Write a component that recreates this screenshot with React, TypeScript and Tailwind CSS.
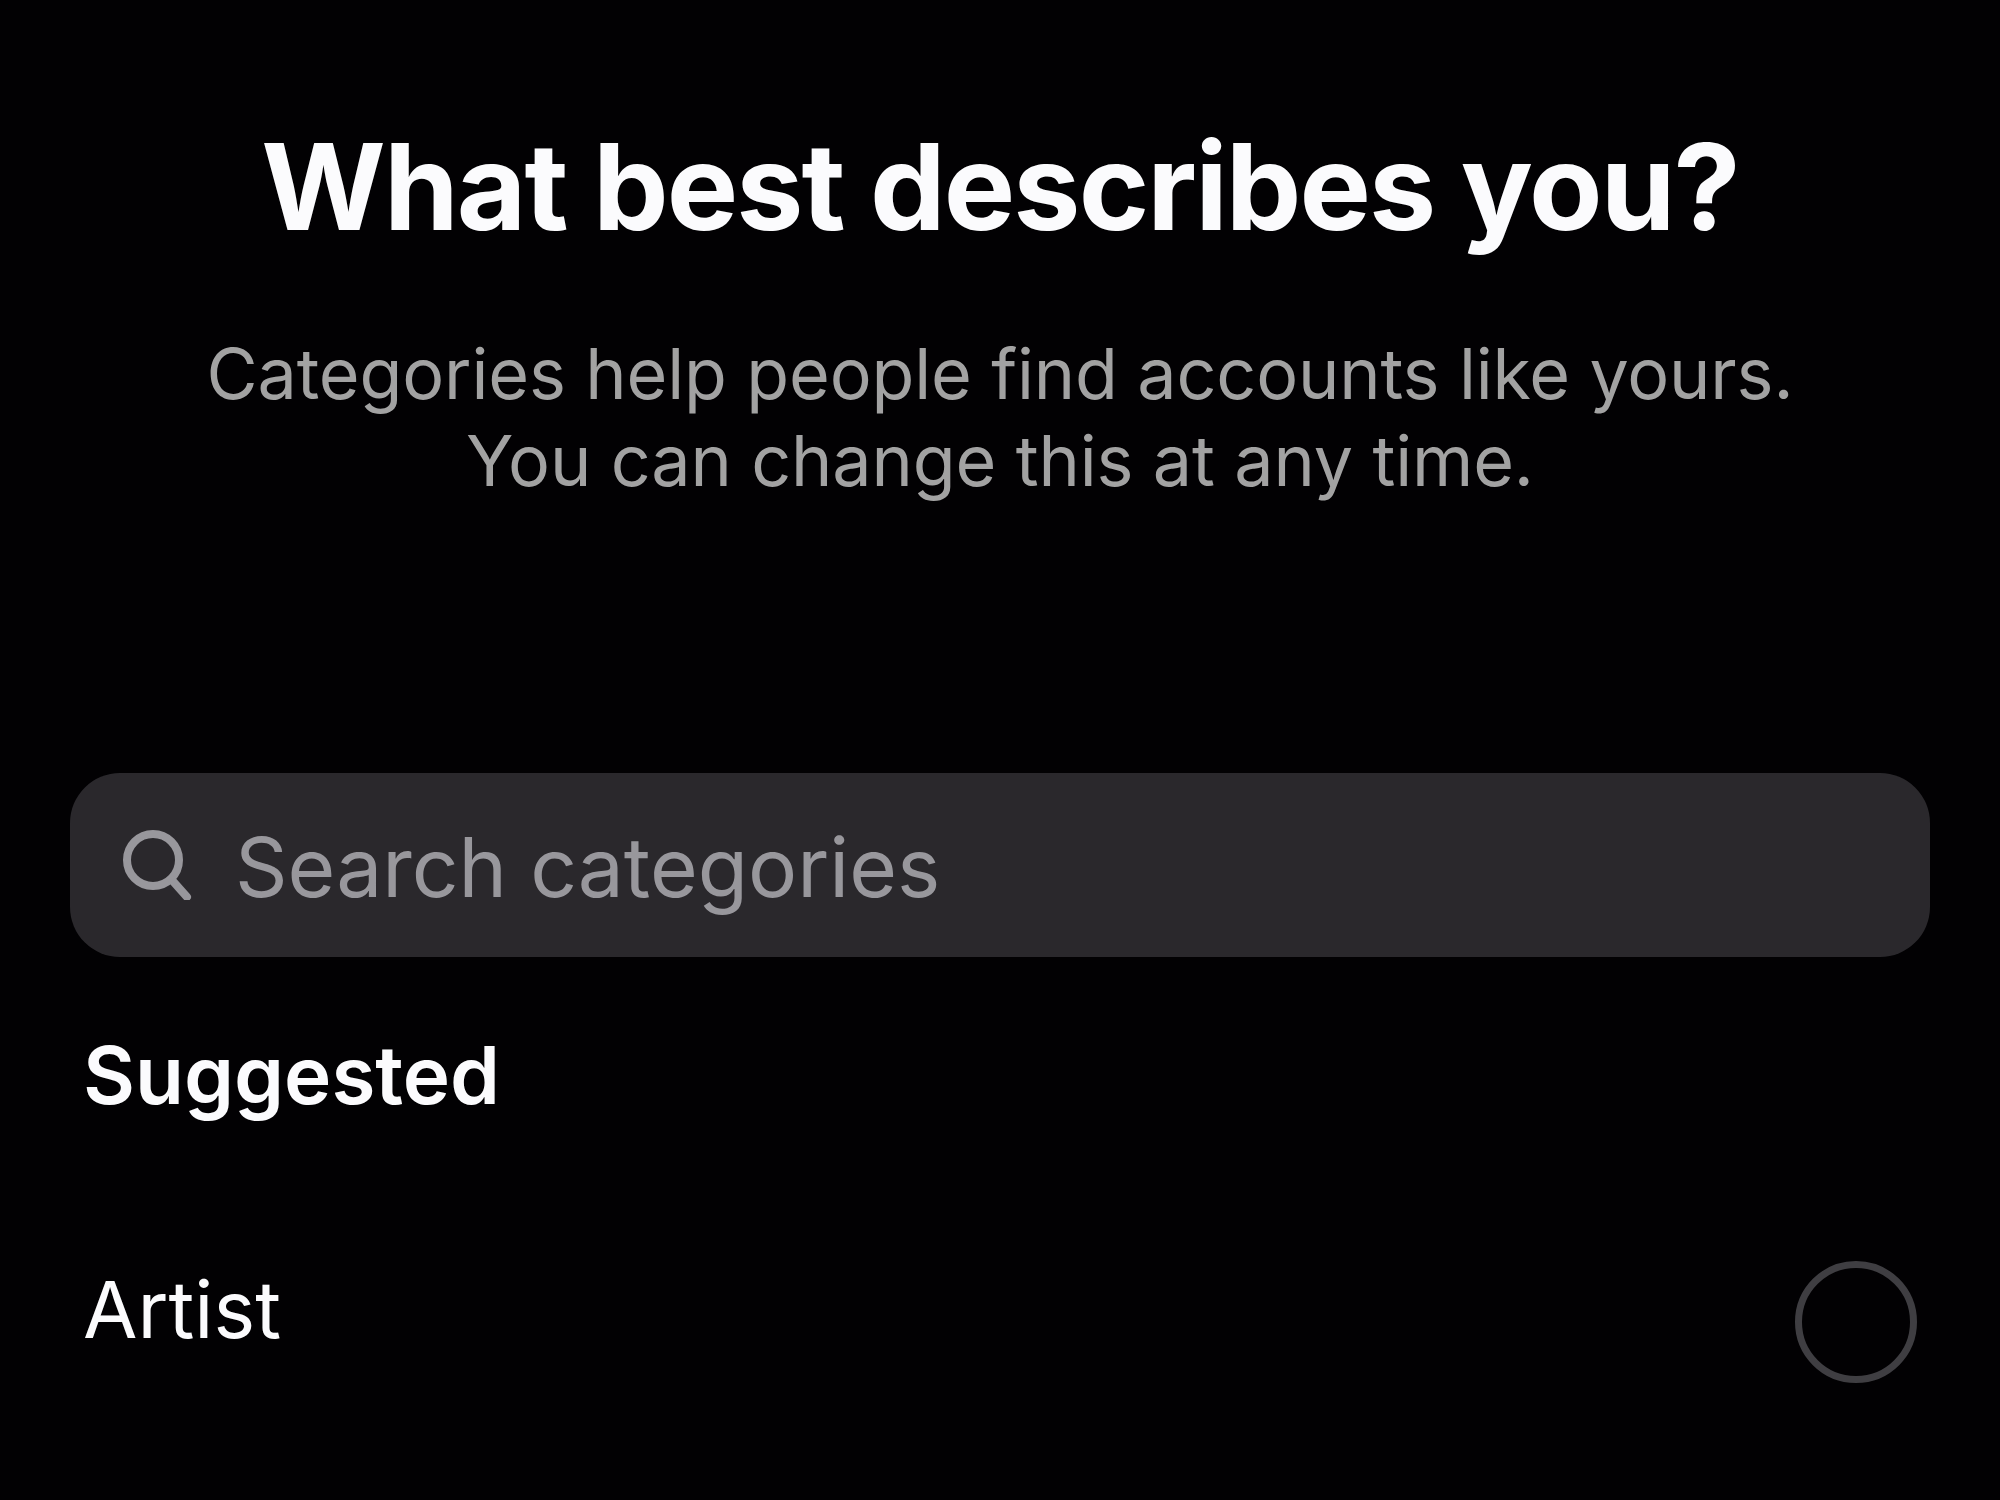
import React from "react";

const SearchGlyph = () => (
  <svg width="70" height="70" viewBox="0 0 70 70" fill="none" className="shrink-0">
    <circle cx="31" cy="30" r="26" stroke="#98979c" strokeWidth="8" />
    <path d="M49 49 L65 67" stroke="#98979c" strokeWidth="8" strokeLinecap="round" />
  </svg>
);

export default function App() {
  return (
    <div className="h-[1500px] w-[2000px] overflow-hidden bg-[#020103] font-['Inter',sans-serif] text-[#fbfbfd]">
      <div className="pt-[119px] text-center">
        <h1 className="text-[120px] leading-[136px] font-bold tracking-[-0.016em]">What best describes you?</h1>
        <p className="mt-[75px] text-[70px] leading-[87px] tracking-[-0.002em] text-[#a2a2a2]">
          Categories help people find accounts like yours.
          <br />
          You can change this at any time.
        </p>
      </div>

      <div className="mt-[269px] px-[70px]">
        <div className="flex h-[184px] items-center gap-[43px] rounded-[50px] bg-[#2a282c] pl-[52px]">
          <SearchGlyph />
          <span className="mt-[6px] text-[82px] leading-none text-[#98979c]">Search categories</span>
        </div>
      </div>

      <div className="px-[83px]">
        <div className="mt-[72px] text-[80px] leading-[92px] font-semibold">Suggested</div>
        <div className="mt-[142px] flex items-start justify-between">
          <span className="text-[79px] leading-[92px]">Artist</span>
          <div className="mt-[-2px] h-[122px] w-[122px] rounded-full border-[7px] border-[#3f3e42]" />
        </div>
      </div>
    </div>
  );
}
